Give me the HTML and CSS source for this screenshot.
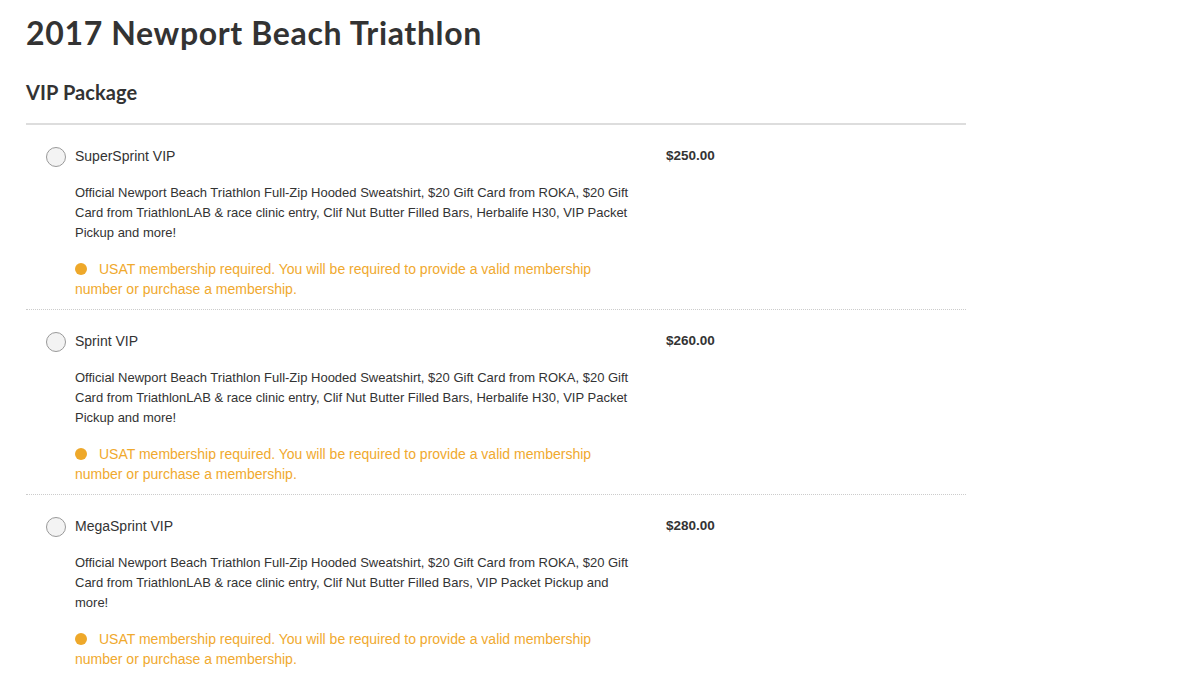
FILE: index.html
```html
<!DOCTYPE html>
<html>
<head>
<meta charset="utf-8">
<link rel="stylesheet" href="styles.css">
</head>
<body>
<div class="page">
  <h1 class="title">2017 Newport Beach Triathlon</h1>
  <h2 class="section">VIP Package</h2>
  <div class="list">
    <div class="item">
      <span class="radio"></span>
      <div class="body">
        <div class="name">SuperSprint VIP</div>
        <p class="desc">Official Newport Beach Triathlon Full-Zip Hooded Sweatshirt, $20 Gift Card from ROKA, $20 Gift Card from TriathlonLAB &amp; race clinic entry, Clif Nut Butter Filled Bars, Herbalife H30, VIP Packet Pickup and more!</p>
        <p class="warn"><span class="dot"></span>USAT membership required. You will be required to provide a valid membership number or purchase a membership.</p>
      </div>
      <div class="price">$250.00</div>
    </div>
    <div class="item">
      <span class="radio"></span>
      <div class="body">
        <div class="name">Sprint VIP</div>
        <p class="desc">Official Newport Beach Triathlon Full-Zip Hooded Sweatshirt, $20 Gift Card from ROKA, $20 Gift Card from TriathlonLAB &amp; race clinic entry, Clif Nut Butter Filled Bars, Herbalife H30, VIP Packet Pickup and more!</p>
        <p class="warn"><span class="dot"></span>USAT membership required. You will be required to provide a valid membership number or purchase a membership.</p>
      </div>
      <div class="price">$260.00</div>
    </div>
    <div class="item">
      <span class="radio"></span>
      <div class="body">
        <div class="name">MegaSprint VIP</div>
        <p class="desc">Official Newport Beach Triathlon Full-Zip Hooded Sweatshirt, $20 Gift Card from ROKA, $20 Gift Card from TriathlonLAB &amp; race clinic entry, Clif Nut Butter Filled Bars, VIP Packet Pickup and more!</p>
        <p class="warn"><span class="dot"></span>USAT membership required. You will be required to provide a valid membership number or purchase a membership.</p>
      </div>
      <div class="price">$280.00</div>
    </div>
  </div>
</div>
</body>
</html>
```
FILE: styles.css
```css
html, body {
  margin: 0;
  padding: 0;
  background: #fff;
}
body {
  font-family: "Liberation Sans", Arial, sans-serif;
  color: #333;
}
.page {
  width: 940px;
  padding: 0 0 0 26px;
}
.title {
  font-family: Lato, "Open Sans", sans-serif;
  font-weight: 700;
  font-size: 32px;
  letter-spacing: 0.65px;
  line-height: 40px;
  margin: 13px 0 0;
  color: #333;
}
.section {
  font-family: Lato, "Open Sans", sans-serif;
  font-weight: 700;
  font-size: 20px;
  letter-spacing: 0.1px;
  line-height: 26px;
  margin: 26px 0 0;
  color: #333;
}
.list {
  margin-top: 18px;
  border-top: 2px solid #ddd;
}
.item {
  display: flex;
  padding: 21px 0 10px 20px;
  border-bottom: 1px dotted #ccc;
}
.item:last-child {
  border-bottom: none;
}
.radio {
  flex: none;
  width: 18px;
  height: 18px;
  border: 1px solid #999;
  border-radius: 50%;
  background: #f3f3f3;
  margin: 1px 9px 0 0;
}
.body {
  width: 560px;
  flex: none;
}
.name {
  font-size: 14px;
  line-height: 20px;
}
.desc {
  margin: 17px 0 0;
  font-size: 13px;
  line-height: 20px;
}
.warn {
  margin: 16px 0 0;
  font-size: 14px;
  line-height: 20px;
  color: #f0a92e;
}
.dot {
  display: inline-block;
  width: 12px;
  height: 12px;
  border-radius: 50%;
  background: #eea82a;
  margin-right: 12px;
  vertical-align: -1px;
}
.price {
  margin: 1px 0 0 31px;
  font-size: 13.5px;
  font-weight: 700;
  line-height: 18px;
}
```
